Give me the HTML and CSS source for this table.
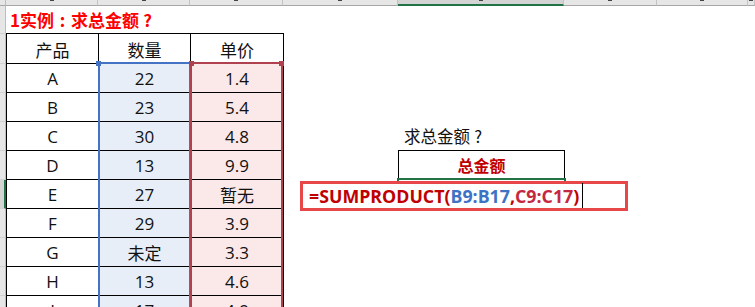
FILE: index.html
```html
<!DOCTYPE html>
<html lang="zh">
<head>
<meta charset="utf-8">
<link rel="stylesheet" href="styles.css">
</head>
<body>
<div class="sheet">
  <div class="corner"></div>
  <div class="colheads">
    <div class="ch w-a"></div>
    <div class="ch w-b"></div>
    <div class="ch w-c"></div>
    <div class="ch w-d"></div>
    <div class="ch w-e on"></div>
    <div class="ch w-f"></div>
    <div class="ch w-g"></div>
    <div class="ch w-h"></div>
  </div>
  <div class="rowheads">
    <div class="rh r-title"></div>
    <div class="rh r-head"></div>
    <div class="rh"></div>
    <div class="rh"></div>
    <div class="rh"></div>
    <div class="rh"></div>
    <div class="rh on"></div>
    <div class="rh"></div>
    <div class="rh"></div>
    <div class="rh"></div>
    <div class="rh"></div>
  </div>
  <div class="main">
    <div class="title">1实例<span class="pc">:</span>求总金额<span class="pc">?</span></div>
    <div class="body">
      <div class="tbl">
        <div class="c h">产品</div><div class="c h">数量</div><div class="c h">单价</div>
        <div class="c">A</div><div class="c b">22</div><div class="c p">1.4</div>
        <div class="c">B</div><div class="c b">23</div><div class="c p">5.4</div>
        <div class="c">C</div><div class="c b">30</div><div class="c p">4.8</div>
        <div class="c">D</div><div class="c b">13</div><div class="c p">9.9</div>
        <div class="c">E</div><div class="c b">27</div><div class="c p">暂无</div>
        <div class="c">F</div><div class="c b">29</div><div class="c p">3.9</div>
        <div class="c">G</div><div class="c b">未定</div><div class="c p">3.3</div>
        <div class="c">H</div><div class="c b">13</div><div class="c p">4.6</div>
        <div class="c">I</div><div class="c b">17</div><div class="c p">4.9</div>
        <div class="sel sel-b"><i class="hd hd-b"></i></div>
        <div class="sel sel-c"><i class="hd hd-cl"></i><i class="hd hd-cr"></i></div>
      </div>
      <div class="calc">
        <div class="q">求总金额<span class="pc">?</span></div>
        <div class="total">总金额</div>
        <div class="active">
          <div class="editor"><span class="fn">=SUMPRODUCT(</span><span class="rb">B9:B17</span><span class="fn">,</span><span class="rc">C9:C17</span><span class="fn">)</span><span class="cursor"></span></div>
        </div>
      </div>
    </div>
  </div>
</div>
</body>
</html>
```
FILE: styles.css
```css
* { box-sizing: border-box; }
html, body { margin: 0; padding: 0; }
body {
  width: 755px;
  height: 307px;
  overflow: hidden;
  background: #fff;
  font-family: "Open Sans", "Noto Sans CJK SC", sans-serif;
  color: #111;
}
.sheet {
  display: grid;
  grid-template-columns: 6px 1fr;
  grid-template-rows: 6px 1fr;
  height: 307px;
}
.corner {
  background: #e6e6e6;
  border-right: 1px solid #bdbdbd;
  border-bottom: 1px solid #a6a6a6;
}
.colheads {
  display: flex;
  background: #e6e6e6;
}
.ch {
  height: 6px;
  border-right: 1px solid #c3c3c3;
  border-bottom: 1px solid #a6a6a6;
  display: flex;
  justify-content: center;
  align-items: flex-start;
}
.ch::after {
  content: "";
  width: 4px;
  height: 1px;
  background: #444;
}
.ch.on { background: #d4d4d4; border-bottom: 2px solid #217346; }
.w-a { width: 92px; }
.w-b { width: 92px; }
.w-c { width: 93px; }
.w-d { width: 115px; }
.w-e { width: 166px; }
.w-f { width: 93px; }
.w-g { width: 91px; }
.w-h { flex: 1; }

.rowheads {
  display: flex;
  flex-direction: column;
  background: #e6e6e6;
}
.rh {
  height: 29px;
  flex: none;
  border-right: 1px solid #bdbdbd;
  border-bottom: 1px solid #d0d0d0;
}
.rh.r-title { height: 28px; }
.rh.r-head { height: 30px; }
.rh.on { background: #d4d4d4; border-right: 2px solid #217346; }

.main { display: flex; flex-direction: column; }
.title {
  height: 27px;
  padding-left: 4px;
  font-family: "Noto Sans CJK SC", sans-serif;
  font-weight: 700;
  font-size: 17px;
  line-height: 27px;
  color: #f00;
  white-space: nowrap;
}
.pc {
  display: inline-block;
  width: 1em;
  text-align: center;
}
.body { display: flex; align-items: flex-start; }

.tbl {
  position: relative;
  display: grid;
  grid-template-columns: 92px 92px 93px;
  grid-template-rows: 30px;
  grid-auto-rows: 29px;
  border-left: 1px solid #000;
  border-top: 1px solid #000;
}
.c {
  border-right: 1px solid #000;
  border-bottom: 1px solid #000;
  display: flex;
  align-items: center;
  justify-content: center;
  font-size: 17px;
  color: #111;
}
.c.h { padding-top: 1px; }
.c.b { background: #e7eef8; }
.c.p { background: #fbe8e8; }

.sel {
  position: absolute;
  top: 28px;
  height: 260px;
  border: 2px solid;
  border-bottom: none;
}
.sel-b { left: 91px; width: 93px; border-color: #4472c4; }
.sel-c { left: 183px; width: 93px; border-color: #b0414f; }
.hd {
  position: absolute;
  top: -3px;
  width: 5px;
  height: 5px;
}
.hd-b { left: -4px; background: #4472c4; }
.hd-cl { left: -3px; background: #b0414f; }
.hd-cr { left: 87px; background: #b0414f; }

.calc {
  margin-left: 114px;
  width: 167px;
  padding-top: 89px;
  display: flex;
  flex-direction: column;
}
.q {
  height: 28px;
  padding-left: 6px;
  font-family: "Noto Sans CJK SC", sans-serif;
  font-size: 16.5px;
  line-height: 28px;
  color: #111;
  white-space: nowrap;
}
.total {
  height: 28px;
  border: 1px solid #000;
  border-bottom: none;
  display: flex;
  align-items: center;
  justify-content: center;
  font-family: "Noto Sans CJK SC", sans-serif;
  font-weight: 700;
  font-size: 16px;
  color: #c00000;
}
.active {
  position: relative;
  height: 32px;
  margin: 0 -1px;
  border: 2px solid #217346;
}
.editor {
  position: absolute;
  left: -99px;
  top: 1px;
  width: 328px;
  height: 30px;
  border: 3px solid #e8474a;
  background: #fff;
  display: flex;
  align-items: center;
  padding-left: 6px;
  font-family: "Open Sans", sans-serif;
  font-weight: 700;
  font-size: 17.8px;
  white-space: nowrap;
}
.fn { color: #c00000; }
.rb { color: #3e72c4; }
.rc { color: #c5283e; }
.cursor {
  display: inline-block;
  width: 1px;
  height: 25px;
  background: #000;
  margin-left: 3px;
  align-self: flex-end;
}
```
